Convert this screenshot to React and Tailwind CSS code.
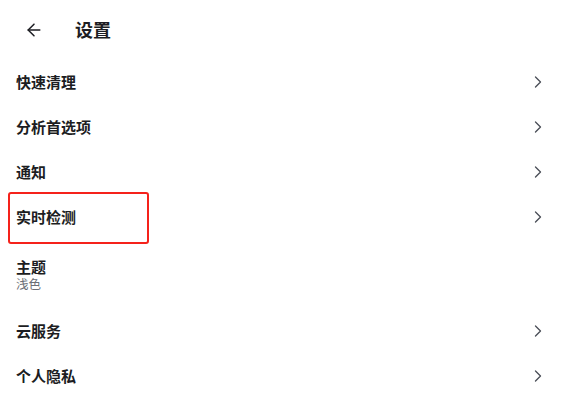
import React from "react";
import { ArrowLeft, ChevronRight } from "lucide-react";

const font = { fontFamily: '"Noto Sans CJK SC", "Noto Sans", sans-serif' };

function Row({ label, chevron = true, highlight = false }) {
  return (
    <div className="relative flex h-[45px] items-center justify-between pl-[16px] pr-[14px]">
      <span className="text-[15px] font-semibold leading-none text-[#1c1d22]">{label}</span>
      {chevron && <ChevronRight size={20} strokeWidth={1.6} className="text-[#4b4f58]" />}
      {highlight && (
        <div className="absolute left-[8px] top-[-2px] h-[52px] w-[141px] rounded-[3px] border-2 border-[#f5221b]" />
      )}
    </div>
  );
}

export default function App() {
  return (
    <div className="h-[412px] w-[562px] bg-white" style={font}>
      <div className="flex h-[59px] items-center pl-[24px]">
        <ArrowLeft size={20} strokeWidth={1.8} className="text-[#1c1d22]" />
        <span className="ml-[31px] text-[18px] font-bold text-[#1c1d22]">设置</span>
      </div>
      <Row label="快速清理" />
      <Row label="分析首选项" />
      <Row label="通知" />
      <Row label="实时检测" highlight />
      <div className="flex h-[69px] flex-col justify-center pl-[16px] pt-[2px]">
        <span className="text-[15px] font-semibold leading-[18px] text-[#1c1d22]">主题</span>
        <span className="text-[12.5px] leading-[15px] text-[#6b6e76]">浅色</span>
      </div>
      <Row label="云服务" />
      <Row label="个人隐私" />
    </div>
  );
}
